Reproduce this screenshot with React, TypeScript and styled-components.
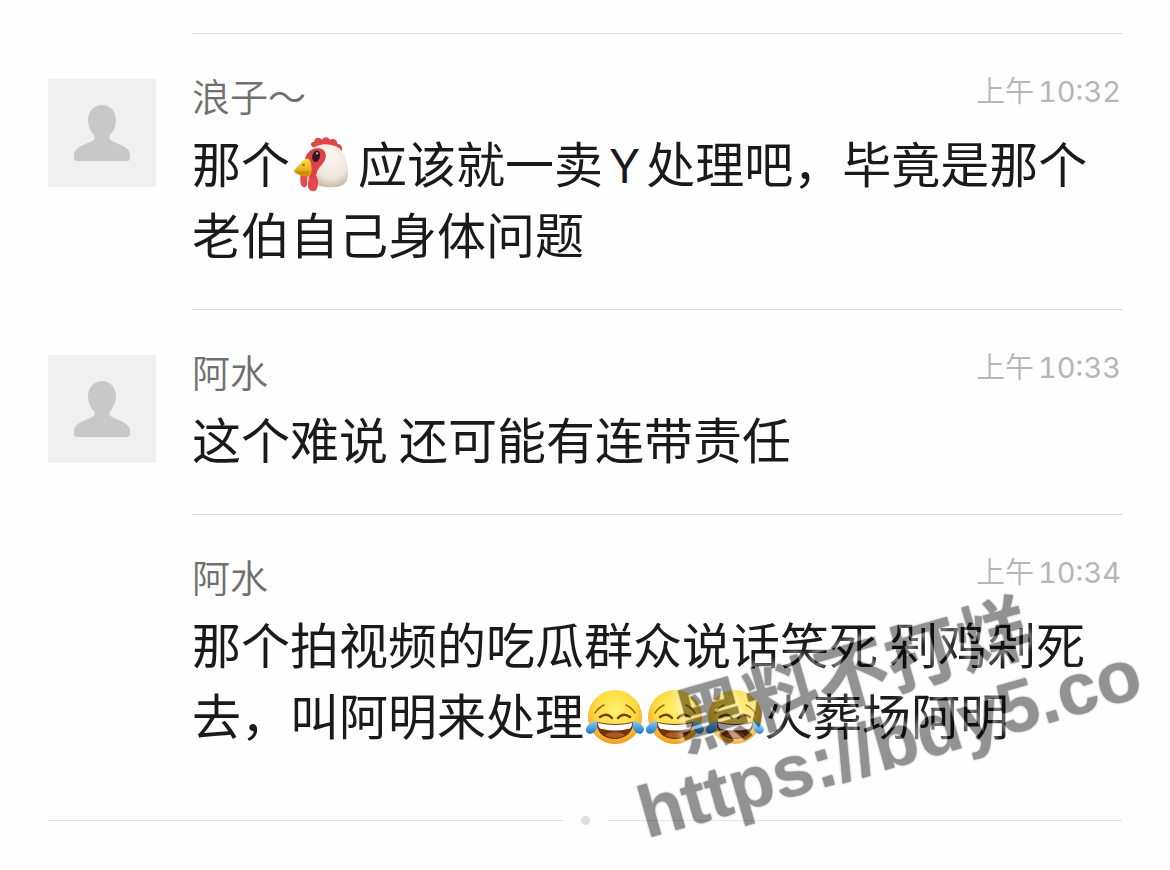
import React from "react";
import styled, { createGlobalStyle } from "styled-components";

const cjk = `"Noto Sans CJK SC", sans-serif`;

const GlobalStyle = createGlobalStyle`
  body {
    margin: 0;
    background: #fefefe;
    font-family: ${cjk};
  }
`;

const Page = styled.main`
  position: relative;
  box-sizing: border-box;
  padding: 33px 48px 45px;
  overflow: hidden;
`;

const Comment = styled.article`
  display: flex;
  gap: 36px;
`;

const AvatarSlot = styled.div`
  flex: none;
  width: 108px;
  padding-top: 46px;
`;

const AvatarBox = styled.svg`
  display: block;
  width: 108px;
  height: 108px;
  background: #f0f0f0;
`;

const Body = styled.div`
  flex: 1;
  min-width: 0;
  border-top: 1px solid #dadada;
  padding: 42px 0 41px;
`;

const Header = styled.header`
  display: flex;
  justify-content: space-between;
  align-items: flex-start;
  margin-bottom: 12px;
`;

const Name = styled.h2`
  margin: 0;
  font-size: 38px;
  line-height: 38px;
  font-weight: 350;
  color: #707070;
`;

const Time = styled.time`
  display: flex;
  gap: 4px;
  padding: 1px 1px 0 0;
  font: 400 29px/30px Inter, ${cjk};
  font-variant-numeric: tabular-nums;
  color: #b6b6b6;
`;

const Period = styled.span`
  font-weight: 350;
`;

const Message = styled.p`
  margin: 0;
  font-size: 49px;
  line-height: 71px;
  font-weight: 400;
  color: #1a1a1a;
`;

const Latin = styled.span`
  padding: 0 6px;
  font-family: Inter, sans-serif;
  font-size: 46px;
  line-height: 1;
`;

const Emoji = styled.svg<{ $spaced?: boolean }>`
  width: 60px;
  height: 60px;
  vertical-align: -12px;
  margin-right: ${(p) => (p.$spaced ? 8 : 0)}px;
`;

const EndMark = styled.div`
  display: flex;
  align-items: center;
  gap: 18px;
  height: 9px;
  margin-top: 26px;

  &::before,
  &::after {
    content: "";
    flex: 1;
    height: 1px;
    background: #e2e2e2;
  }
`;

const Dot = styled.span`
  width: 9px;
  height: 9px;
  border-radius: 50%;
  background: #dfdfdf;
`;

const Watermark = styled.div`
  position: absolute;
  left: 650px;
  top: 702px;
  transform: rotate(-16deg);
  transform-origin: 0 100%;
  opacity: 0.42;
  color: #000;
  font: 700 73px/74px "Liberation Sans", ${cjk};
  white-space: nowrap;
  text-shadow: 0 0 2px #000, 0 0 6px #fff, 0 0 6px #fff, 0 0 8px #fff, 0 0 8px #fff,
    0 0 10px #fff, 0 0 10px #fff, 0 0 12px #fff;
  pointer-events: none;
`;

const WatermarkLine = styled.div<{ $title?: boolean }>`
  padding-left: ${(p) => (p.$title ? 60 : 0)}px;
`;

const Avatar = () => (
  <AvatarBox viewBox="0 0 108 108" role="img" aria-label="头像">
    <path
      fill="#c8c8c8"
      d="M54 26c-8 0-14 6.500-14 15 0 6.500 2.500 11 5.500 14.500 1.300 1.800 1.500 3.500.5 5-1.500 1.800-5 3.100-9 4.800C30 68 26 71.500 26 76v3c0 2 1 3 3 3h50c2 0 3-1 3-3v-3c0-4.500-4-8-11-10.700-4-1.700-7.500-3-9-4.800-1-1.500-.8-3.200.5-5C65.500 52 68 47.500 68 41c0-8.500-6-15-14-15z"
    />
  </AvatarBox>
);

const Chicken = () => (
  <Emoji $spaced viewBox="0 0 60 62" role="img" aria-label="鸡">
    <defs>
      <radialGradient id="feather" cx=".55" cy=".3" r=".75">
        <stop offset="0" stopColor="#fbf7f0" />
        <stop offset=".65" stopColor="#eee6dc" />
        <stop offset="1" stopColor="#c4b3a1" />
      </radialGradient>
      <linearGradient id="beak" x1="0" y1="0" x2="0" y2="1">
        <stop offset="0" stopColor="#ffe04a" />
        <stop offset="1" stopColor="#dc9204" />
      </linearGradient>
    </defs>
    <path fill="#e0474b" d="M25 13c-5 0-6-6-1-6 0-5 6-5 8-2 2-4 7-3 8 0 4-2 8 0 8 4 4 0 6 4 4 9L39 12z" />
    <path fill="url(#feather)" d="M20 17c6-9 19-9 27-5 8 4 12 17 12 27 0 12-6 15-18 15-11 0-19-3-20-13z" />
    <path fill="#e5484d" d="M19 38c5 1 9 5 9 10 0 6-1 10-5 10s-7-4-5-10zM10 41l7 1c0 7 0 12-3 12-4 0-5-6-4-13z" />
    <path fill="#dc4247" d="M18 18c6-7 18-5 18 3 0 8-6 10-9 17-1 6-4 8-7 6l-5-17c-1-4 1-7 3-9z" />
    <path fill="url(#beak)" d="M17 24c-5 2-10 8-14 13 1 4 9 6 16 6 2-3 3-7 2-11 0-4-2-7-4-8z" />
    <path fill="#b98208" d="M4 37c6 1 10 1 15 0l-1 5c-6 0-12-1-14-5z" opacity=".65" />
    <ellipse cx="26" cy="22" rx="4" ry="6" fill="#30191c" transform="rotate(12 26 22)" />
    <circle cx="27" cy="19" r="1.200" fill="#fff" opacity=".7" />
    <circle cx="13" cy="31" r="1.200" fill="#926500" />
  </Emoji>
);

const Joy = () => (
  <Emoji viewBox="0 0 60 60" role="img" aria-label="笑哭">
    <defs>
      <radialGradient id="face" cx=".5" cy=".38" r=".62">
        <stop offset="0" stopColor="#fff16b" />
        <stop offset=".6" stopColor="#ffdc42" />
        <stop offset="1" stopColor="#f29a22" />
      </radialGradient>
      <linearGradient id="tear" x1="0" y1="0" x2="0" y2="1">
        <stop offset="0" stopColor="#8acdf4" />
        <stop offset="1" stopColor="#1878cb" />
      </linearGradient>
    </defs>
    <circle cx="31" cy="30" r="27" fill="url(#face)" />
    <path d="M11 26q3-5 9-8M51 26q-3-5-9-8" fill="none" stroke="#a66508" strokeWidth="1.500" strokeLinecap="round" />
    <path d="M16 30q7-5 12 1M34 31q5-6 12-1" fill="none" stroke="#75400a" strokeWidth="2.500" strokeLinecap="round" />
    <path d="M13 35q18 4 36 0c1 10-8 17-18 17s-19-6-18-17z" fill="#74310c" />
    <path d="M14 36q17 4 34 0c0 4-2 6-4 6q-13 3-26 0c-2 0-4-2-4-6z" fill="#fff" />
    <path d="M21 48c5-4 15-4 20 0-5 4-15 4-20 0z" fill="#a65b24" />
    <path d="M13 34C8 34 3 38 2 42c-1 4 4 6 7 4 4-2 5-8 4-12zM49 34c5 0 10 4 11 8 0 4-4 6-7 4-4-2-5-8-4-12z" fill="url(#tear)" />
  </Emoji>
);

interface EntryProps {
  name: string;
  time: string;
  avatar?: boolean;
  children: React.ReactNode;
}

const Entry = ({ name, time, avatar, children }: EntryProps) => (
  <Comment>
    <AvatarSlot>{avatar && <Avatar />}</AvatarSlot>
    <Body>
      <Header>
        <Name>{name}</Name>
        <Time>
          <Period>上午</Period>
          <span>{time}</span>
        </Time>
      </Header>
      <Message>{children}</Message>
    </Body>
  </Comment>
);

export default function App() {
  return (
    <>
      <GlobalStyle />
      <Page lang="zh-CN">
        <Entry name="浪子～" time="10:32" avatar>
          那个
          <Chicken />
          应该就一卖<Latin>Y</Latin>处理吧，毕竟是那个老伯自己身体问题
        </Entry>
        <Entry name="阿水" time="10:33" avatar>
          这个难说 还可能有连带责任
        </Entry>
        <Entry name="阿水" time="10:34">
          那个拍视频的吃瓜群众说话笑死 剁鸡剁死去，叫阿明来处理
          <Joy />
          <Joy />
          <Joy />
          火葬场阿明
        </Entry>
        <EndMark>
          <Dot />
        </EndMark>
        <Watermark>
          <WatermarkLine $title>黑料不打烊</WatermarkLine>
          <WatermarkLine>https://bdy5.co</WatermarkLine>
        </Watermark>
      </Page>
    </>
  );
}
